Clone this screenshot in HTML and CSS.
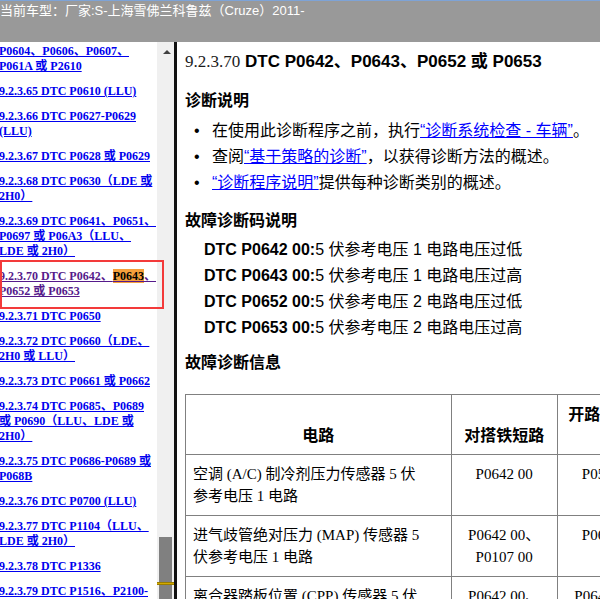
FILE: index.html
```html
<!DOCTYPE html>
<html>
<head>
    <meta charset="utf-8">
    <title>9.2.3.70 DTC P0642、P0643、P0652 或 P0653</title>
    <link rel="stylesheet" href="styles.css">
</head>
<body>
    <div class="titlebar">当前车型：厂家:S-上海雪佛兰科鲁兹（Cruze）2011-</div>

    <div class="main">
        <!-- table of contents -->
        <div class="toc">
            <div class="toc-list">
                <div class="toc-item"><a href="#">P0604、P0606、P0607、<br>P061A 或 P2610</a></div>
                <div class="toc-item"><a href="#">9.2.3.65 DTC P0610 (LLU)</a></div>
                <div class="toc-item"><a href="#">9.2.3.66 DTC P0627-P0629<br>(LLU)</a></div>
                <div class="toc-item"><a href="#">9.2.3.67 DTC P0628 或 P0629</a></div>
                <div class="toc-item"><a href="#">9.2.3.68 DTC P0630（LDE 或<br>2H0）</a></div>
                <div class="toc-item"><a href="#">9.2.3.69 DTC P0641、P0651、<br>P0697 或 P06A3（LLU、<br>LDE 或 2H0）</a></div>
                <div class="toc-item current"><a href="#" class="visited">9.2.3.70 DTC P0642、<span class="hit">P0643</span>、<br>P0652 或 P0653</a></div>
                <div class="toc-item"><a href="#">9.2.3.71 DTC P0650</a></div>
                <div class="toc-item"><a href="#">9.2.3.72 DTC P0660（LDE、<br>2H0 或 LLU）</a></div>
                <div class="toc-item"><a href="#">9.2.3.73 DTC P0661 或 P0662</a></div>
                <div class="toc-item"><a href="#">9.2.3.74 DTC P0685、P0689<br>或 P0690（LLU、LDE 或<br>2H0）</a></div>
                <div class="toc-item"><a href="#">9.2.3.75 DTC P0686-P0689 或<br>P068B</a></div>
                <div class="toc-item"><a href="#">9.2.3.76 DTC P0700 (LLU)</a></div>
                <div class="toc-item"><a href="#">9.2.3.77 DTC P1104（LLU、<br>LDE 或 2H0）</a></div>
                <div class="toc-item"><a href="#">9.2.3.78 DTC P1336</a></div>
                <div class="toc-item"><a href="#">9.2.3.79 DTC P1516、P2100-</a></div>
            </div>
            <div class="scrollbar">
                <div class="sb-up"></div>
                <div class="sb-thumb"></div>
                <div class="sb-mark"></div>
            </div>
        </div>

        <div class="divider"></div>

        <!-- document -->
        <div class="doc">
            <h1 class="doc-title"><span class="num">9.2.3.70</span> DTC P0642、P0643、P0652 或 P0653</h1>

            <h2>诊断说明</h2>
            <ul class="bullets">
                <li>在使用此诊断程序之前，执行<a href="#">“诊断系统检查 - 车辆”</a>。</li>
                <li>查阅<a href="#">“基于策略的诊断”</a>，以获得诊断方法的概述。</li>
                <li><a href="#">“诊断程序说明”</a>提供每种诊断类别的概述。</li>
            </ul>

            <h2>故障诊断码说明</h2>
            <div class="dtc-list">
                <div><b>DTC P0642 00:</b>5 伏参考电压 1 电路电压过低</div>
                <div><b>DTC P0643 00:</b>5 伏参考电压 1 电路电压过高</div>
                <div><b>DTC P0652 00:</b>5 伏参考电压 2 电路电压过低</div>
                <div><b>DTC P0653 00:</b>5 伏参考电压 2 电路电压过高</div>
            </div>

            <h2>故障诊断信息</h2>
            <table class="info">
                <colgroup>
                    <col class="c-circuit">
                    <col class="c-code">
                    <col class="c-code">
                </colgroup>
                <tr class="head">
                    <th>电路</th>
                    <th>对搭铁短路</th>
                    <th>开路/电阻过大</th>
                </tr>
                <tr>
                    <td class="name">空调 (A/C) 制冷剂压力传感器 5 伏<br>参考电压 1 电路</td>
                    <td>P0642 00</td>
                    <td>P0532 00</td>
                </tr>
                <tr>
                    <td class="name">进气歧管绝对压力 (MAP) 传感器 5<br>伏参考电压 1 电路</td>
                    <td>P0642 00、P0107 00</td>
                    <td>P0651 00</td>
                </tr>
                <tr>
                    <td class="name">离合器踏板位置 (CPP) 传感器 5 伏<br>参考电压 1 电路</td>
                    <td>P0642 00、P0806 00</td>
                    <td>P0642 00、P0806 00</td>
                </tr>
            </table>
        </div>
    </div>
</body>
</html>
```

FILE: styles.css
```css
body {
    margin: 0;
    height: 599px;
    overflow: hidden;
    background-color: #fff;
    font-family: "Liberation Sans", "Noto Sans CJK SC", sans-serif;
}

.titlebar {
    height: 40px;
    padding-top: 1px;
    border-top: 1px solid #7ea3d6;
    background-color: #999;
    color: #fff;
    font-size: 13px;
    line-height: 18px;
    white-space: nowrap;
}

.main {
    display: flex;
    height: 557px;
}

/* left pane */

.toc {
    display: flex;
    flex: none;
}

.toc-list {
    width: 158px;
    padding-top: 2px;
    margin-left: -1px;
    font-family: "Liberation Serif", "Noto Sans CJK SC", serif;
    font-size: 12px;
    font-weight: bold;
    line-height: 15px;
    white-space: nowrap;
}

.toc-item {
    position: relative;
    margin-bottom: 10px;
}

.toc-item a {
    color: #0000ee;
}

.toc-item a.visited {
    color: #551a8b;
}

.toc-item .hit {
    background-color: #f5a03c;
    color: #000;
}

.toc-item.current::after {
    content: "";
    position: absolute;
    z-index: 2;
    left: 1px;
    top: -9px;
    width: 160px;
    bottom: -10px;
    border: 2px solid #f33a3a;
}

.scrollbar {
    position: relative;
    width: 17px;
    background-color: #f0f0f0;
}

.sb-up {
    position: absolute;
    left: 6px;
    top: 8px;
    border-left: 4px solid transparent;
    border-right: 4px solid transparent;
    border-bottom: 4px solid #404040;
}

.sb-thumb {
    position: absolute;
    left: 2px;
    top: 495px;
    width: 13px;
    bottom: 0;
    background-color: #808080;
}

.sb-mark {
    position: absolute;
    left: 0;
    right: 0;
    top: 540px;
    height: 3px;
    background-color: #d2aa00;
    border-top: 1px solid #9a7c00;
    border-bottom: 1px solid #9a7c00;
    box-sizing: border-box;
}

.divider {
    flex: none;
    width: 3px;
    background-color: #111;
}

/* right pane */

.doc {
    flex: 1;
    min-width: 0;
    overflow: hidden;
    padding-left: 8px;
    color: #000;
    font-size: 16px;
    white-space: nowrap;
}

.doc-title {
    margin: 10px 0 0;
    font-size: 17px;
    line-height: 20px;
    font-weight: bold;
}

.doc-title .num {
    font-family: "Liberation Serif", "Noto Sans CJK SC", serif;
    font-weight: normal;
    color: #1a1a1a;
}

.doc h2 {
    margin: 19px 0 0;
    font-size: 16px;
    line-height: 20px;
    font-weight: bold;
}

.doc a {
    color: #0000ff;
}

.bullets {
    list-style: none;
    margin: 7px 0 0;
    padding: 0;
    line-height: 26px;
}

.bullets li::before {
    content: "•";
    display: inline-block;
    width: 18px;
    margin-left: 9px;
}

.bullets + h2 {
    margin-top: 15px;
}

.dtc-list {
    margin-top: 6px;
    padding-left: 19px;
    line-height: 26px;
}

.dtc-list + h2 {
    margin-top: 12px;
}

.info {
    margin-top: 21px;
    border-collapse: collapse;
    table-layout: fixed;
    width: 479px;
    font-family: "Liberation Serif", "Noto Sans CJK SC", serif;
    font-size: 15px;
    line-height: 22px;
    white-space: normal;
}

.info .c-circuit {
    width: 265px;
}

.info .c-code {
    width: 106px;
}

.info tr {
    height: 60px;
}

.info th,
.info td {
    border: 1px solid #808080;
    padding: 8px 4px;
    text-align: center;
    vertical-align: top;
}

.info th {
    vertical-align: bottom;
    font-size: 16px;
    line-height: 21px;
}

.info td.name {
    padding: 8px 7px;
    text-align: left;
}
```
